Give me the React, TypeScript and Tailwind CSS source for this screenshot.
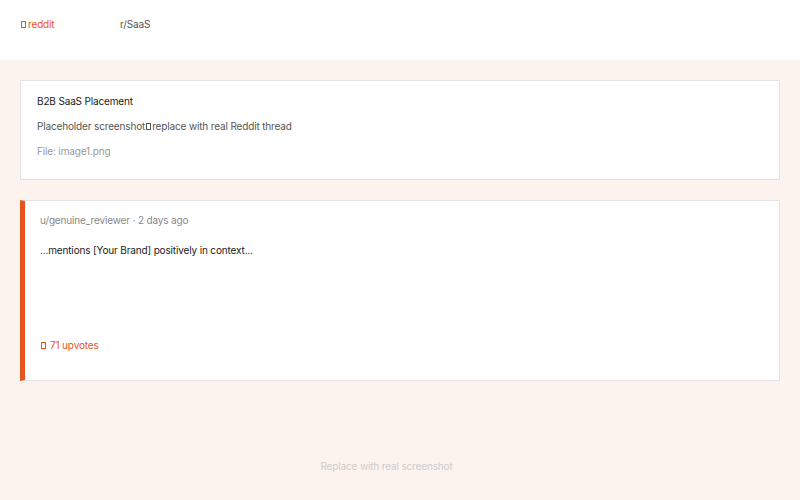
function Tofu() {
  return <span className="inline-block w-[5px] h-[7px] border border-current mx-[1px]" />;
}

export default function App() {
  return (
    <div className="w-[800px] h-[500px] bg-[#fdf3ee] font-['Inter',sans-serif] text-[10px] tracking-[-0.15px] flex flex-col">
      <div className="h-[60px] bg-white flex items-center px-5 pb-[12px]">
        <span className="w-[100px] text-[#e8541e] flex items-center gap-[1px]"><Tofu />reddit</span>
        <span className="text-[#555]">r/SaaS</span>
      </div>
      <div className="flex flex-col gap-5 px-5 pt-5">
        <div className="bg-white border border-[#e3e3e3] h-[100px] px-4 pt-[13px] flex flex-col gap-[10px]">
          <div className="text-[#1a1a1a]">B2B SaaS Placement</div>
          <div className="text-[#555] flex items-center">Placeholder screenshot<Tofu />replace with real Reddit thread</div>
          <div className="text-[#999]">File: image1.png</div>
        </div>
        <div className="bg-white border border-[#e3e3e3] border-l-[5px] border-l-[#e8541e] h-[181px] pl-[15px] pt-[12px] flex flex-col">
          <div className="text-[#888]">u/genuine_reviewer · 2 days ago</div>
          <div className="text-[#1a1a1a] mt-[15px]">...mentions [Your Brand] positively in context...</div>
          <div className="text-[#e8541e] mt-auto mb-[27px] flex items-center gap-[3px]"><Tofu />71 upvotes</div>
        </div>
      </div>
      <div className="mt-auto mb-[26px] pr-[27px] text-center text-[#cccccc]">Replace with real screenshot</div>
    </div>
  );
}
